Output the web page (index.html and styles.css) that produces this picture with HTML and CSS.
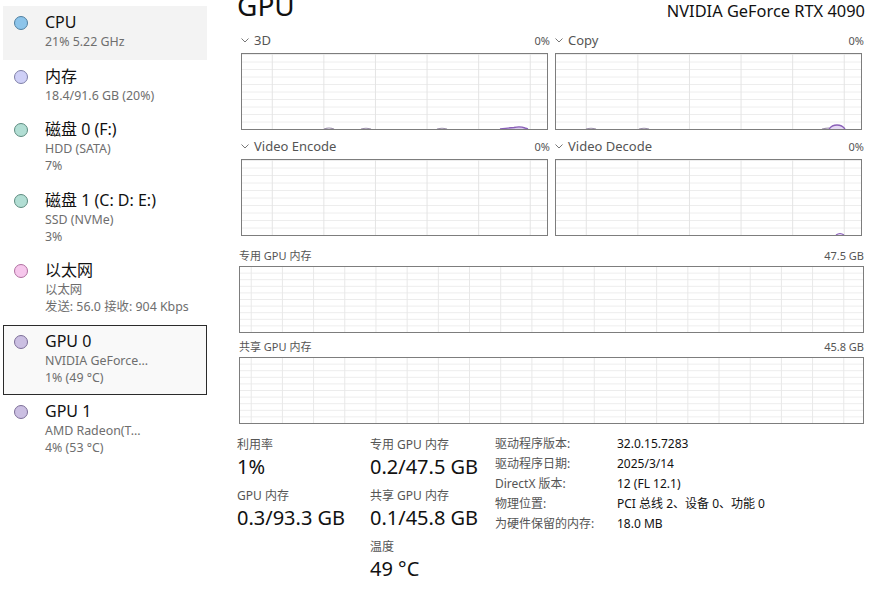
FILE: index.html
```html
<!DOCTYPE html>
<html>
<head>
  <meta charset="utf-8">
  <title>任务管理器 - GPU</title>
  <link rel="stylesheet" href="styles.css">
</head>
<body>
<div class="app">
  <div class="side">
    <div class="item active">
      <span class="dot cpu"></span>
      <div class="info">
        <div class="name">CPU</div>
        <div class="sub">21% 5.22 GHz</div>
      </div>
    </div>
    <div class="item">
      <span class="dot mem"></span>
      <div class="info">
        <div class="name">内存</div>
        <div class="sub">18.4/91.6 GB (20%)</div>
      </div>
    </div>
    <div class="item">
      <span class="dot disk"></span>
      <div class="info">
        <div class="name">磁盘 0 (F:)</div>
        <div class="sub">HDD (SATA)</div>
        <div class="sub">7%</div>
      </div>
    </div>
    <div class="item">
      <span class="dot disk"></span>
      <div class="info">
        <div class="name">磁盘 1 (C: D: E:)</div>
        <div class="sub">SSD (NVMe)</div>
        <div class="sub">3%</div>
      </div>
    </div>
    <div class="item">
      <span class="dot net"></span>
      <div class="info">
        <div class="name">以太网</div>
        <div class="sub">以太网</div>
        <div class="sub">发送: 56.0 接收: 904 Kbps</div>
      </div>
    </div>
    <div class="item selected">
      <span class="dot gpu"></span>
      <div class="info">
        <div class="name">GPU 0</div>
        <div class="sub">NVIDIA GeForce...</div>
        <div class="sub">1% (49 °C)</div>
      </div>
    </div>
    <div class="item">
      <span class="dot gpu"></span>
      <div class="info">
        <div class="name">GPU 1</div>
        <div class="sub">AMD Radeon(T...</div>
        <div class="sub">4% (53 °C)</div>
      </div>
    </div>
  </div>

  <div class="main">
    <div class="head">
      <h1>GPU</h1>
      <div class="model">NVIDIA GeForce RTX 4090</div>
    </div>

    <div class="small-grid">
      <div class="cell">
        <div class="cell-head">
          <span class="ttl"><svg class="chev" width="8" height="5" viewBox="0 0 8 5"><path d="M0.5 0.5 L4 4 L7.5 0.5" fill="none" stroke="#777" stroke-width="1"/></svg>3D</span>
          <span class="pct">0%</span>
        </div>
        <div class="graph small">
          <svg viewBox="0 0 305 75" preserveAspectRatio="none">
            <path d="M82 75 Q87 73 92 75 M119 75 Q124 73.5 129 75 M195 75 Q200 73.5 205 75" fill="none" stroke="#9a8fa8" stroke-width="1.2"/>
            <path d="M258 75 Q266 74 272 73.5 Q278 72 283 74 L286 75" fill="#d9c9ee" stroke="#8a60b8" stroke-width="1.4"/>
          </svg>
        </div>
      </div>
      <div class="cell">
        <div class="cell-head">
          <span class="ttl"><svg class="chev" width="8" height="5" viewBox="0 0 8 5"><path d="M0.5 0.5 L4 4 L7.5 0.5" fill="none" stroke="#777" stroke-width="1"/></svg>Copy</span>
          <span class="pct">0%</span>
        </div>
        <div class="graph small">
          <svg viewBox="0 0 305 75" preserveAspectRatio="none">
            <path d="M30 75 Q35 73.5 40 75 M83 75 Q88 73.5 93 75 M266 75 Q270 74 273 74" fill="none" stroke="#9a8fa8" stroke-width="1.2"/>
            <path d="M273 75 Q276 71 281 71 Q286 71 289 75" fill="#e6d9f4" stroke="#8a60b8" stroke-width="1.4"/>
          </svg>
        </div>
      </div>
      <div class="cell">
        <div class="cell-head">
          <span class="ttl"><svg class="chev" width="8" height="5" viewBox="0 0 8 5"><path d="M0.5 0.5 L4 4 L7.5 0.5" fill="none" stroke="#777" stroke-width="1"/></svg>Video Encode</span>
          <span class="pct">0%</span>
        </div>
        <div class="graph small"></div>
      </div>
      <div class="cell">
        <div class="cell-head">
          <span class="ttl"><svg class="chev" width="8" height="5" viewBox="0 0 8 5"><path d="M0.5 0.5 L4 4 L7.5 0.5" fill="none" stroke="#777" stroke-width="1"/></svg>Video Decode</span>
          <span class="pct">0%</span>
        </div>
        <div class="graph small">
          <svg viewBox="0 0 305 75" preserveAspectRatio="none">
            <path d="M280 75 Q284 72 288 75" fill="#e6d9f4" stroke="#8a60b8" stroke-width="1.2"/>
          </svg>
        </div>
      </div>
    </div>

    <div class="wide">
      <div class="wide-head"><span>专用 GPU 内存</span><span>47.5 GB</span></div>
      <div class="graph big"></div>
      <div class="wide-head second"><span>共享 GPU 内存</span><span>45.8 GB</span></div>
      <div class="graph big"></div>
    </div>

    <div class="stats">
      <div class="col one">
        <div class="stat">
          <div class="lbl">利用率</div>
          <div class="val">1%</div>
        </div>
        <div class="stat">
          <div class="lbl">GPU 内存</div>
          <div class="val">0.3/93.3 GB</div>
        </div>
      </div>
      <div class="col two">
        <div class="stat">
          <div class="lbl">专用 GPU 内存</div>
          <div class="val">0.2/47.5 GB</div>
        </div>
        <div class="stat">
          <div class="lbl">共享 GPU 内存</div>
          <div class="val">0.1/45.8 GB</div>
        </div>
        <div class="stat">
          <div class="lbl">温度</div>
          <div class="val">49 °C</div>
        </div>
      </div>
      <div class="props">
        <div class="k">驱动程序版本:</div><div class="v">32.0.15.7283</div>
        <div class="k">驱动程序日期:</div><div class="v">2025/3/14</div>
        <div class="k">DirectX 版本:</div><div class="v">12 (FL 12.1)</div>
        <div class="k">物理位置:</div><div class="v">PCI 总线 2、设备 0、功能 0</div>
        <div class="k">为硬件保留的内存:</div><div class="v">18.0 MB</div>
      </div>
    </div>
  </div>
</div>
</body>
</html>
```

FILE: styles.css
```css
body {
  margin: 0;
  background: #fff;
  color: #1a1a1a;
  font-family: "Segoe UI", "Noto Sans", "Noto Sans CJK SC", sans-serif;
  overflow: hidden;
}
.app { display: flex; height: 603px; }

/* left list */
.side { width: 204px; padding: 6px 0 0 3px; }
.item {
  display: flex;
  align-items: flex-start;
  padding: 4px 0 8.5px 10px;
  border: 1px solid transparent;
}
.item.active { background: #f3f3f3; }
.item.selected { border-color: #2b2b2b; background: #f9f9f9; }
.dot {
  width: 12px; height: 12px;
  border-radius: 50%;
  border: 1px solid #666;
  margin: 5px 17px 0 0;
  flex: none;
}
.dot.cpu { background: #8cc4ea; border-color: #4f7fa0; }
.dot.mem { background: #cfd0f7; border-color: #7f80a8; }
.dot.disk { background: #b2ded4; border-color: #5e8c80; }
.dot.net { background: #f6c7ec; border-color: #b070a0; }
.dot.gpu { background: #cbbfe2; border-color: #7d6f98; }
.name { font-size: 16px; line-height: 22px; height: 22px; color: #111; }
.sub { font-size: 12.4px; line-height: 17px; height: 17px; color: #6e6e6e; white-space: nowrap; }

/* right panel */
.main { width: 630px; margin-left: 30px; }
.head { display: flex; justify-content: space-between; height: 30px; }
h1 {
  margin: -13px 0 0 0;
  font-size: 28px;
  font-weight: normal;
  line-height: 36px;
  color: #111;
}
.model { font-size: 16.4px; line-height: 22px; color: #111; padding-right: 2px; }

.small-grid {
  display: grid;
  grid-template-columns: 307px 307px;
  column-gap: 7px;
  row-gap: 6px;
  margin-left: 4px;
}
.cell-head {
  display: flex;
  justify-content: space-between;
  align-items: center;
  height: 20px;
  margin-bottom: 3px;
}
.ttl { font-size: 13px; color: #555; display: flex; align-items: center; }
.chev { margin: 1px 5px 0 0; }
.pct { font-size: 11px; color: #555; margin-right: -2px; }

.graph {
  border: 1px solid #7d7d7d;
  box-sizing: border-box;
  display: flex;
}
.graph svg { width: 100%; height: 100%; display: block; }
.graph.small {
  height: 77px;
  background-image:
    repeating-linear-gradient(to right, transparent 0 29.5px, #e4e4e4 29.5px 30.5px, transparent 30.5px 51.6px),
    repeating-linear-gradient(to bottom, transparent 0 7px, #ececec 7px 8px);
  background-size: 51.6px 100%, 100% 7.5px;
  background-position: 0 0, 0 1px;
}
.wide { margin-left: 2px; width: 625px; }
.wide-head {
  display: flex;
  justify-content: space-between;
  font-size: 11px;
  color: #555;
  height: 20px;
  line-height: 20px;
  margin-top: 10px;
}
.wide-head.second { margin-top: 4px; }
.graph.big {
  height: 67px;
  background-image:
    linear-gradient(to right, transparent 0 11px, #e8e8e8 11px 12px, transparent 12px),
    repeating-linear-gradient(to bottom, transparent 0 5.6px, #ececec 5.6px 6.6px);
  background-size: 31.2px 100%, 100% 6.6px;
  background-repeat: repeat;
}

/* bottom numbers */
.stats { display: flex; margin-top: 12px; }
.col.one { width: 133px; }
.col.two { width: 125px; }
.stat { margin-bottom: 6px; }
.lbl { font-size: 12px; line-height: 18px; height: 18px; color: #555; }
.val { font-size: 20px; line-height: 28px; height: 28px; color: #111; margin-top: -1px; }
.props {
  display: grid;
  grid-template-columns: 122px auto;
  grid-auto-rows: 20px;
  font-size: 12px;
  line-height: 20px;
  margin-top: -2px;
  align-self: flex-start;
}
.props .k { color: #555; }
.props .v { color: #111; }
```
